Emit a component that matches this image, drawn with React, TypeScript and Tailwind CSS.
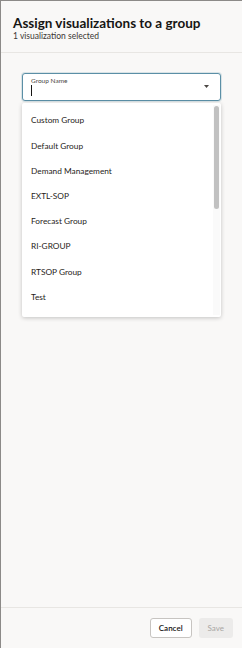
import { useState } from "react";

const groups = [
  "Custom Group",
  "Default Group",
  "Demand Management",
  "EXTL-SOP",
  "Forecast Group",
  "RI-GROUP",
  "RTSOP Group",
  "Test",
];

export default function App() {
  const [value, setValue] = useState("");

  return (
    <div
      className="flex h-[648px] w-[242px] flex-col border-l border-t border-[#8c8a88] bg-[#f9f8f7] text-[#161513]"
      style={{ fontFamily: "Lato, 'Open Sans', sans-serif" }}
    >
      <div className="border-b border-[#e8e6e3] px-3 pb-[10px] pt-[16px]">
        <h1 className="text-[13.5px] font-bold leading-[13px]">
          Assign visualizations to a group
        </h1>
        <p className="text-[8.5px] leading-[12px] text-[#3a3633]">
          1 visualization selected
        </p>
      </div>

      <div className="flex-1 px-[21px] pt-[20px]">
        <div className="relative">
          <div className="flex h-[28px] items-start rounded-[3px] border border-[#5b8fa6] bg-white px-[8px] shadow-[0_0_0_1px_rgba(91,143,166,0.2)]">
            <div className="flex flex-1 flex-col pt-[3px]">
              <span className="text-[6.5px] leading-[8px] text-[#4b4744]">
                Group Name
              </span>
              <div className="flex h-[11px] items-center">
                <input
                  value={value}
                  onChange={(e) => setValue(e.target.value)}
                  className="h-[11px] w-full border-l border-[#161513] bg-transparent text-[9px] outline-none"
                />
              </div>
            </div>
            <svg
              width="5"
              height="3"
              viewBox="0 0 5 3"
              className="mr-[3px] mt-[11px] shrink-0"
            >
              <path d="M0 0h5L2.5 3z" fill="#4b4744" />
            </svg>
          </div>

          <div className="absolute left-0 right-0 top-[30px] flex h-[214px] rounded-[2px] bg-white shadow-[0_1px_4px_rgba(0,0,0,0.22)]">
            <ul className="flex-1 pt-[5px]">
              {groups.map((g) => (
                <li
                  key={g}
                  onClick={() => setValue(g)}
                  className="flex h-[25.2px] items-center px-[9px] text-[8.3px] text-[#1f1c1a]"
                >
                  {g}
                </li>
              ))}
            </ul>
            <div className="my-[2px] mr-[1px] w-[7px] bg-[#fafafa] py-[1px]">
              <div className="mx-auto h-[103px] w-[5px] rounded-full bg-[#c1c1c1]" />
            </div>
          </div>
        </div>
      </div>

      <div className="flex justify-end gap-[7px] border-t border-[#e8e6e3] px-[9px] pb-[10px] pt-[10px]">
        <button className="h-[20px] rounded-[3px] border border-[#c7c4c1] bg-white px-[8px] text-[8px] font-semibold text-[#161513]">
          Cancel
        </button>
        <button
          disabled
          className="h-[20px] rounded-[3px] bg-[#ecebea] px-[9px] text-[8px] text-[#a9a6a3]"
        >
          Save
        </button>
      </div>
    </div>
  );
}
